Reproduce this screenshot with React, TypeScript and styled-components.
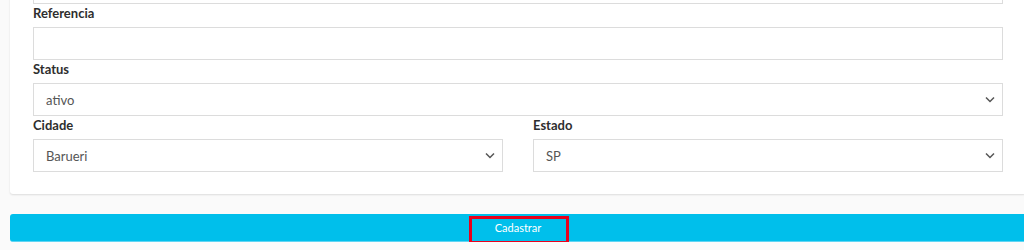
import React from 'react';
import styled, { createGlobalStyle } from 'styled-components';

const GlobalStyle = createGlobalStyle`
  html, body {
    margin: 0;
    padding: 0;
    background: #fafafa;
    overflow: hidden;
  }
  body {
    font-family: Lato, "Liberation Sans", sans-serif;
  }
`;

const Page = styled.div`
  width: 1016px;
  margin-left: 10px;
`;

const Card = styled.div`
  background: #ffffff;
  border-radius: 3px;
  box-shadow: 0 1px 2px rgba(0, 0, 0, 0.12);
  padding: 0 23px 22px;
  margin-top: -29px;
`;

const Field = styled.div`
  display: flex;
  flex-direction: column;
`;

const Row = styled.div`
  display: grid;
  grid-template-columns: 1fr 1fr;
  column-gap: 30px;
`;

const Label = styled.label`
  display: block;
  height: 19px;
  line-height: 19px;
  margin: 0 0 4px;
  font-size: 13px;
  font-weight: 700;
  color: #2e2e2e;
`;

const Input = styled.input`
  box-sizing: border-box;
  height: 33px;
  width: 100%;
  border: 1px solid #dcdcdc;
  border-radius: 0;
  background: #fff;
  padding: 0 12px;
  font-family: inherit;
  font-size: 13px;
  color: #555;
  outline: none;
`;

const SelectWrap = styled.div`
  position: relative;
`;

const Select = styled.select`
  box-sizing: border-box;
  height: 33px;
  width: 100%;
  border: 1px solid #dcdcdc;
  border-radius: 0;
  background: #fff;
  padding: 0 12px;
  font-family: inherit;
  font-size: 13px;
  color: #555;
  appearance: none;
  outline: none;
`;

const Chevron = styled.svg`
  position: absolute;
  right: 8px;
  top: 13px;
  width: 10px;
  height: 7px;
  pointer-events: none;
`;

const Actions = styled.div`
  position: relative;
  margin-top: 20px;
`;

const Submit = styled.button`
  display: block;
  box-sizing: border-box;
  width: 100%;
  height: 28px;
  border: none;
  border-bottom: 1px solid #5fd4f2;
  border-radius: 3px;
  background: #00bfeb;
  color: #ffffff;
  font-family: inherit;
  font-size: 11px;
  cursor: pointer;
`;

const Highlight = styled.span`
  position: absolute;
  left: 459px;
  top: 2px;
  width: 100px;
  height: 28px;
  box-sizing: border-box;
  border: 3px solid #e8001c;
  pointer-events: none;
`;

function SelectField({ value }: { value: string }) {
  return (
    <SelectWrap>
      <Select defaultValue={value}>
        <option>{value}</option>
      </Select>
      <Chevron viewBox="0 0 10 7">
        <path d="M1 1.5 L5 5.5 L9 1.5" fill="none" stroke="#555" strokeWidth="1.5" />
      </Chevron>
    </SelectWrap>
  );
}

export default function App() {
  return (
    <Page>
      <GlobalStyle />
      <Card>
        <Field>
          <Input />
        </Field>
        <Field>
          <Label>Referencia</Label>
          <Input />
        </Field>
        <Field>
          <Label>Status</Label>
          <SelectField value="ativo" />
        </Field>
        <Row>
          <Field>
            <Label>Cidade</Label>
            <SelectField value="Barueri" />
          </Field>
          <Field>
            <Label>Estado</Label>
            <SelectField value="SP" />
          </Field>
        </Row>
      </Card>
      <Actions>
        <Submit>Cadastrar</Submit>
        <Highlight />
      </Actions>
    </Page>
  );
}
